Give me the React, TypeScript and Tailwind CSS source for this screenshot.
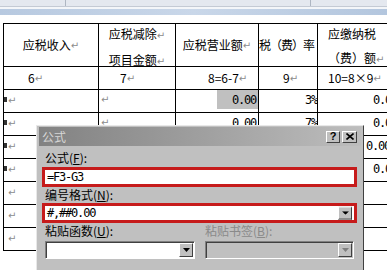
const cjk = "font-['Noto_Sans_CJK_SC',sans-serif]";
const mono = "font-['DejaVu_Sans_Mono',monospace] text-[12px] tracking-[-1.2px]";

function Mark() {
  return <span className="text-[10px] text-[#8c8c8c] font-['DejaVu_Sans',sans-serif]">↵</span>;
}

function ArrowBtn({ disabled }: { disabled?: boolean }) {
  return (
    <div className="w-[14px] h-[14px] bg-[#c0c0c0] border-t border-l border-t-white border-l-white border-b border-r border-b-[#404040] border-r-[#404040] flex items-center justify-center">
      <svg width="7" height="4" viewBox="0 0 7 4">
        <path d="M0 0h7L3.5 4z" fill={disabled ? "#808080" : "#000"} />
      </svg>
    </div>
  );
}

const rows = [
  { mark: true, c2: true, c3: "0.00", shade: true, c4: "3%", c5: "0.00", pr: "pr-[0px]" },
  { mark: true, c2: true, c3: "0.00", shade: false, c4: "7%", c5: "0.00", pr: "pr-[0px]" },
  { mark: true, c2: false, c3: "", shade: false, c4: "", c5: "0.00", pr: "pr-[7px]" },
  { mark: true, c2: false, c3: "", shade: false, c4: "", c5: "0.00", pr: "pr-[0px]" },
  { mark: false, c2: false, c3: "", shade: false, c4: "", c5: "", pr: "pr-[0px]" },
  { mark: false, c2: false, c3: "", shade: false, c4: "", c5: "", pr: "pr-[0px]" },
  { mark: false, c2: false, c3: "", shade: false, c4: "", c5: "", pr: "pr-[0px]" },
];

const cell = "border-r border-b border-black overflow-hidden";

export default function App() {
  return (
    <div className={`relative w-[387px] h-[270px] overflow-hidden bg-white text-black ${cjk}`}>
      {/* toolbar strip */}
      <div className="h-[7px] flex bg-[#e4e8ef] border-b border-[#c4cad4]">
        <div className="w-[66px] border-r border-[#aeb6c2]" />
        <div className="w-[245px] border-r border-[#aeb6c2]" />
      </div>
      <div className="h-[2px] bg-[#f4f6f9]" />
      <div className="h-[6px] bg-gradient-to-r from-[#b7c9e0] via-[#c9d7e9] to-[#b3c6de]" />
      <div className="h-[8px]" />

      {/* table */}
      <div className="ml-[3px] w-[400px] border-l border-t border-black grid grid-cols-[95px_77px_83px_59px_80px] text-[12px]">
        <div className={`${cell} h-[43px] flex items-center justify-center`}>
          应税收入<Mark />
        </div>
        <div className={`${cell} h-[43px] flex flex-col items-center gap-[4px] leading-[20px]`}>
          <div>应税减除<Mark /></div>
          <div>项目金额<Mark /></div>
        </div>
        <div className={`${cell} h-[43px] flex items-center justify-center`}>
          应税营业额<Mark />
        </div>
        <div className={`${cell} h-[43px] flex items-center whitespace-nowrap tracking-[-1px]`}>
          税（费）率
        </div>
        <div className={`${cell} h-[43px] flex flex-col gap-[4px] pl-[10px] leading-[20px] whitespace-nowrap`}>
          <div>应缴纳税</div>
          <div>（费）额<Mark /></div>
        </div>

        <div className={`${cell} h-[23px] flex items-center pl-[24px]`}>
          6<Mark />
        </div>
        <div className={`${cell} h-[23px] flex items-center pl-[21px]`}>
          7<Mark />
        </div>
        <div className={`${cell} h-[23px] flex items-center pl-[32px]`}>
          8=6-7<Mark />
        </div>
        <div className={`${cell} h-[23px] flex items-center pl-[24px]`}>
          9<Mark />
        </div>
        <div className={`${cell} h-[23px] flex items-center pl-[10px] whitespace-nowrap`}>
          10=8×9<Mark />
        </div>

        {rows.map((r, i) => (
          <div key={i} className="contents">
            <div className={`${cell} h-[23px] flex items-start pt-[1px]`}>
              {r.mark ? <span className="w-[3px] h-[5px] bg-[#333] mt-[6px]" /> : <span className="w-[3px]" />}
              <span className="ml-[1px] leading-[16px]"><Mark /></span>
            </div>
            <div className={`${cell} h-[23px] pl-[2px] leading-[16px]`}>
              {r.c2 && <Mark />}
            </div>
            <div className={`${cell} h-[23px] flex justify-end`}>
              {r.c3 && (
                <span className={`h-[19px] w-[41px] flex items-center justify-end pr-[2px] ${r.shade ? "bg-[#c0c0c0]" : ""} ${mono}`}>
                  {r.c3}
                </span>
              )}
            </div>
            <div className={`${cell} h-[23px] flex justify-end`}>
              <span className={`h-[19px] flex items-center ${mono}`}>{r.c4}</span>
            </div>
            <div className={`${cell} h-[23px] flex justify-end ${r.pr}`}>
              <span className={`h-[19px] flex items-center ${mono}`}>{r.c5}</span>
            </div>
          </div>
        ))}
      </div>

      {/* formula dialog */}
      <div className="absolute left-[36px] top-[125px] w-[328px] h-[150px] bg-[#c0c0c0] border-l border-t border-l-[#e8e8e8] border-t-[#e8e8e8] border-r border-r-[#404040] text-[12px]">
        <div className="mx-[2px] mt-[1px] h-[19px] bg-gradient-to-r from-[#828282] to-[#bdbdbd] flex items-center justify-between pl-[3px] pr-[4px]">
          <span className="text-[#d6d6d6] text-[12px]">公式</span>
          <div className="flex gap-[2px]">
            <div className="w-[14px] h-[12px] bg-[#c0c0c0] border-t border-l border-white border-b border-r border-b-[#404040] border-r-[#404040] flex items-center justify-center font-['Liberation_Sans',sans-serif] font-bold text-[11px] leading-none">
              ?
            </div>
            <div className="w-[15px] h-[12px] bg-[#c0c0c0] border-t border-l border-white border-b border-r border-b-[#404040] border-r-[#404040] flex items-center justify-center">
              <svg width="8" height="7" viewBox="0 0 8 7">
                <path d="M0.5 0.5L7.5 6.5M7.5 0.5L0.5 6.5" stroke="#000" strokeWidth="1.6" />
              </svg>
            </div>
          </div>
        </div>

        <div className="pt-[4px]">
          <div className="h-[16px] leading-[16px] pl-[8px]">
            公式(<span className="underline">F</span>):
          </div>
          <div className="mt-[1px] ml-[5px] w-[315px] h-[20px] border-[3px] border-[#c61b1b] bg-white flex items-center pl-[2px]">
            <span className={mono}>=F3-G3</span>
          </div>
          <div className="h-[16px] leading-[16px] pl-[8px]">
            编号格式(<span className="underline">N</span>):
          </div>
          <div className="ml-[5px] w-[315px] h-[20px] border-[3px] border-[#c61b1b] bg-white flex items-center justify-between pl-[2px] pr-[2px]">
            <span className={mono}>#,##0.00</span>
            <div className="scale-y-[0.93]">
              <ArrowBtn />
            </div>
          </div>
          <div className="h-[16px] leading-[16px] flex">
            <div className="w-[168px] pl-[8px]">
              粘贴函数(<span className="underline">U</span>):
            </div>
            <div className="text-[#8a8a8a]">
              粘贴书签(<span className="underline">B</span>):
            </div>
          </div>
          <div className="mt-[2px] flex">
            <div className="ml-[8px] w-[150px] h-[18px] bg-white border-t border-l border-t-[#808080] border-l-[#808080] border-b border-r border-b-white border-r-white shadow-[inset_1px_1px_0_#404040] flex justify-end items-center pr-[1px]">
              <ArrowBtn />
            </div>
            <div className="ml-[10px] w-[149px] h-[18px] bg-[#c0c0c0] border-t border-l border-t-[#808080] border-l-[#808080] border-b border-r border-b-white border-r-white shadow-[inset_1px_1px_0_#404040] flex justify-end items-center pr-[1px]">
              <ArrowBtn disabled />
            </div>
          </div>
        </div>
      </div>
    </div>
  );
}
